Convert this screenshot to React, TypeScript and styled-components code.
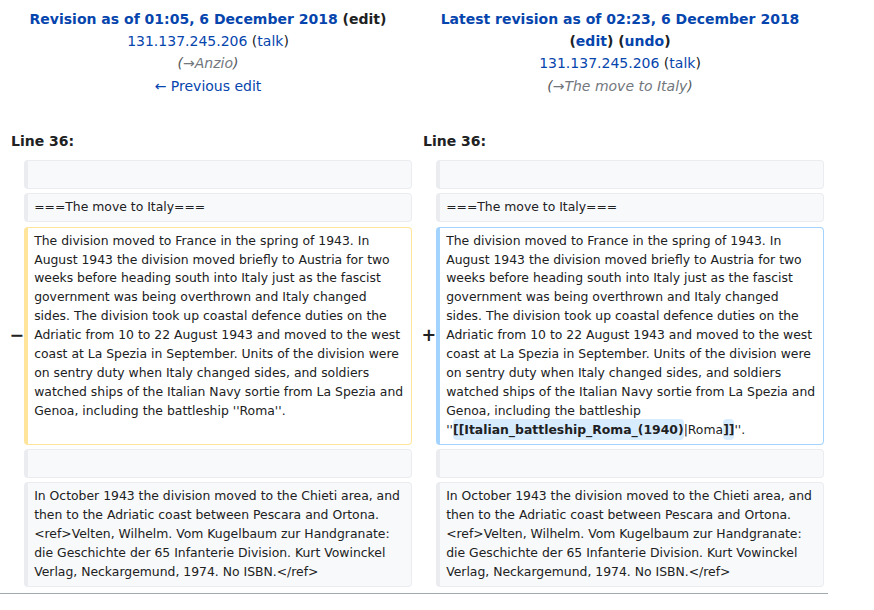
import styled, { createGlobalStyle } from 'styled-components'

const GlobalStyle = createGlobalStyle`
  body {
    margin: 0;
    background: #fff;
    color: #202122;
    font-family: 'DejaVu Sans', sans-serif;
  }
`

const Page = styled.div`
  width: 828px;
`

const DiffTable = styled.div`
  display: grid;
  grid-template-columns: 2fr 48fr 2fr 48fr;
  column-gap: 4px;
  row-gap: 4.4px;
  padding: 4px;
  font-size: 14px;
  line-height: 22.2px;
`

const Title = styled.div<{ $side: 'left' | 'right' }>`
  grid-column: ${({ $side }) => ($side === 'left' ? '1 / span 2' : '3 / span 2')};
  text-align: center;
  padding-top: 4px;
`

const Heading = styled.div`
  font-weight: bold;
`

const Link = styled.a`
  color: #0645ad;
  text-decoration: none;
  cursor: pointer;
`

const Plain = styled.span`
  color: #202122;
`

const Comment = styled.span`
  font-style: italic;
  color: #54595d;
`

const AutoComment = styled.span`
  color: #72777d;
`

const LineNo = styled.div<{ $side: 'left' | 'right' }>`
  grid-column: ${({ $side }) => ($side === 'left' ? '1 / span 2' : '3 / span 2')};
  font-weight: bold;
  line-height: 22.4px;
  padding: 28.5px 0 3.5px 7px;
`

const Marker = styled.div<{ $side: 'left' | 'right' }>`
  grid-column: ${({ $side }) => ($side === 'left' ? 1 : 3)};
  align-self: center;
  text-align: right;
  margin-right: -4px;
  font-weight: bold;
  font-size: 17.5px;
  line-height: 21px;
`

type Kind = 'context' | 'deleted' | 'added'

const borderColors: Record<Kind, string> = {
  context: '#eaecf0',
  deleted: '#ffe49c',
  added: '#a3d3ff',
}

const Line = styled.div<{ $side: 'left' | 'right'; $kind: Kind }>`
  grid-column: ${({ $side }) => ($side === 'left' ? 2 : 4)};
  font-size: 12.4px;
  line-height: 18.9px;
  padding: 4px 5px 4px 6px;
  border-style: solid;
  border-width: 1px 1px 1px 4px;
  border-color: ${({ $kind }) => borderColors[$kind]};
  border-radius: 4px;
  background: ${({ $kind }) => ($kind === 'context' ? '#f8f9fa' : '#fff')};
  color: #202122;
  white-space: pre-wrap;
  overflow-wrap: break-word;
  min-width: 0;
`

const Change = styled.ins`
  text-decoration: none;
  font-weight: bold;
  background: #d8ecff;
  border-radius: 4px;
  padding: 3px 0;
`

const BottomRule = styled.div`
  height: 1px;
  margin-top: 2px;
  background: #a2a9b1;
`

const oldText =
  "The division moved to France in the spring of 1943. In August 1943 the division moved briefly to Austria for two weeks before heading south into Italy just as the fascist government was being overthrown and Italy changed sides. The division took up coastal defence duties on the Adriatic from 10 to 22 August 1943 and moved to the west coast at La Spezia in September. Units of the division were on sentry duty when Italy changed sides, and soldiers watched ships of the Italian Navy sortie from La Spezia and Genoa, including the battleship ''Roma''."

const newPrefix =
  "The division moved to France in the spring of 1943. In August 1943 the division moved briefly to Austria for two weeks before heading south into Italy just as the fascist government was being overthrown and Italy changed sides. The division took up coastal defence duties on the Adriatic from 10 to 22 August 1943 and moved to the west coast at La Spezia in September. Units of the division were on sentry duty when Italy changed sides, and soldiers watched ships of the Italian Navy sortie from La Spezia and Genoa, including the battleship ''"

const octoberText =
  'In October 1943 the division moved to the Chieti area, and then to the Adriatic coast between Pescara and Ortona. <ref>Velten, Wilhelm. Vom Kugelbaum zur Handgranate: die Geschichte der 65 Infanterie Division. Kurt Vowinckel Verlag, Neckargemund, 1974. No ISBN.</ref>'

const EMPTY = '\u00a0'

function ContextRow({ text }: { text: string }) {
  return (
    <>
      <Line $side="left" $kind="context">
        {text}
      </Line>
      <Line $side="right" $kind="context">
        {text}
      </Line>
    </>
  )
}

export default function App() {
  return (
    <Page>
      <GlobalStyle />
      <DiffTable>
        <Title $side="left">
          <Heading>
            <Link>Revision as of 01:05, 6 December 2018</Link> <Plain>(edit)</Plain>
          </Heading>
          <div>
            <Link>131.137.245.206</Link> <Plain>(</Plain>
            <Link>talk</Link>
            <Plain>)</Plain>
          </div>
          <div>
            <Comment>
              (<AutoComment>→Anzio</AutoComment>)
            </Comment>
          </div>
          <div>
            <Link>← Previous edit</Link>
          </div>
        </Title>
        <Title $side="right">
          <Heading>
            <Link>Latest revision as of 02:23, 6 December 2018</Link>
            <br />
            <Plain>(</Plain>
            <Link>edit</Link>
            <Plain>)</Plain> <Plain>(</Plain>
            <Link>undo</Link>
            <Plain>)</Plain>
          </Heading>
          <div>
            <Link>131.137.245.206</Link> <Plain>(</Plain>
            <Link>talk</Link>
            <Plain>)</Plain>
          </div>
          <div>
            <Comment>
              (<AutoComment>→The move to Italy</AutoComment>)
            </Comment>
          </div>
        </Title>

        <LineNo $side="left">Line 36:</LineNo>
        <LineNo $side="right">Line 36:</LineNo>

        <ContextRow text={EMPTY} />
        <ContextRow text="===The move to Italy===" />

        <Marker $side="left">−</Marker>
        <Line $side="left" $kind="deleted">
          {oldText}
        </Line>
        <Marker $side="right">+</Marker>
        <Line $side="right" $kind="added">
          {newPrefix}
          <Change>[[Italian_battleship_Roma_(1940)</Change>|Roma<Change>]]</Change>
          {"''."}
        </Line>

        <ContextRow text={EMPTY} />
        <ContextRow text={octoberText} />
      </DiffTable>
      <BottomRule />
    </Page>
  )
}
